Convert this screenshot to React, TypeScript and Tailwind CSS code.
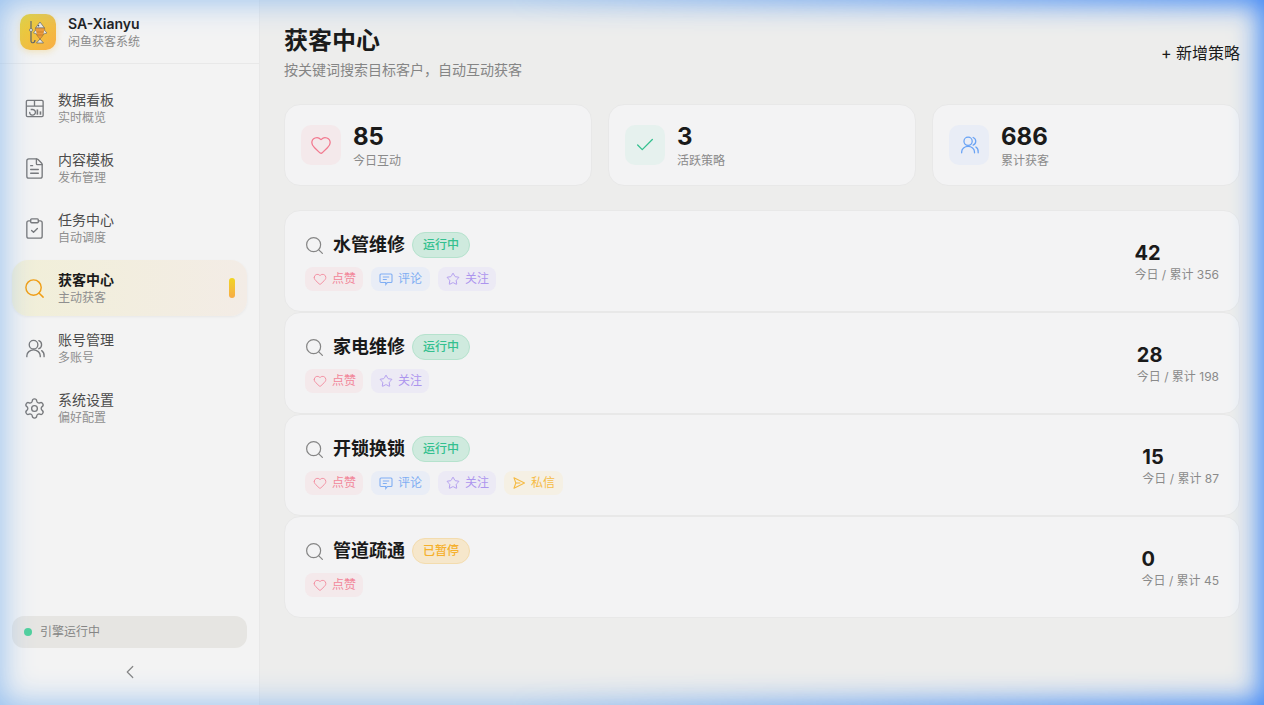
import { ChevronLeft, Check, ClipboardCheck, FileText, Heart, Search, Settings, Star } from 'lucide-react';
import type { ReactNode } from 'react';

function BoardIcon({ className }: { className?: string }) {
  return (
    <svg viewBox="0 0 24 24" fill="none" stroke="currentColor" strokeWidth="1.4" className={className}>
      <rect x="3.500" y="3.500" width="17.500" height="17" rx="1.200" />
      <path d="M3.500 9.500h17.500M12 3.500v6" />
      <path d="M7 15.500a3 3 0 1 0 3.200-2.500H8" />
      <path d="M15 13v5.500" strokeWidth="1.700" />
      <path d="M18.200 15v3.500" strokeWidth="1.700" />
    </svg>
  );
}

function UsersIcon({ className }: { className?: string }) {
  return (
    <svg viewBox="0 0 24 24" fill="none" stroke="currentColor" strokeWidth="1.400" strokeLinecap="round" className={className}>
      <circle cx="11" cy="8" r="4.500" />
      <path d="M16.500 3.800a4.500 4.500 0 0 1 0 8.400" />
      <path d="M4 20.500V19.500a7 6 0 0 1 14 0v1" />
      <path d="M19.500 14.200a6 6 0 0 1 2.500 5.300v1" />
    </svg>
  );
}

function CommentIcon({ className }: { className?: string }) {
  return (
    <svg viewBox="0 0 14 14" fill="none" stroke="currentColor" strokeWidth="1.100" className={className}>
      <path d="M2 2h10a1 1 0 0 1 1 1v6.500a1 1 0 0 1-1 1H8.500L6.800 12.500V10.500H2a1 1 0 0 1-1-1V3a1 1 0 0 1 1-1z" />
      <path d="M3.800 5h6.400M3.800 7.500h4" />
    </svg>
  );
}

function SendIcon({ className }: { className?: string }) {
  return (
    <svg viewBox="0 0 14 14" fill="none" stroke="currentColor" strokeWidth="1.100" strokeLinejoin="round" className={className}>
      <path d="M2 1.800 12.500 7 2 12.200 3.800 7z" />
      <path d="M3.800 7h4.500" />
    </svg>
  );
}

function FishLogo() {
  return (
    <svg viewBox="0 0 36 36" className="h-9 w-9">
      <path d="M11 7v20c0 2.500 4 2.500 4-1" fill="none" stroke="#5f6368" strokeWidth="1.200" />
      <circle cx="11" cy="16" r="1.500" fill="#f0f0e8" stroke="#5f6368" strokeWidth="0.700" />
      <path d="M20 8 24.500 14h-9z" fill="#ecebe6" stroke="#5f6368" strokeWidth="0.700" />
      <path d="M15.500 14h9c.8 3.800-1 7.500-4.500 11-3.500-3.500-5.300-7.200-4.500-11z" fill="#ee9a3a" stroke="#8a6a3c" strokeWidth="0.600" />
      <path d="M16.200 18h7.600M17 21h6" stroke="#b87420" strokeWidth="0.600" />
      <path d="M24.200 16l2.800 3-3.500 1M15.800 16l-2.300 3 3.300 1" fill="#ecebe6" stroke="#5f6368" strokeWidth="0.600" />
      <path d="M20 25l-3.500 4h7z" fill="#ecebe6" stroke="#5f6368" strokeWidth="0.700" />
      <circle cx="18.500" cy="11.800" r="0.800" fill="#374151" />
    </svg>
  );
}

const navItems = [
  { icon: <BoardIcon className="h-[23px] w-[23px]" />, title: '数据看板', sub: '实时概览' },
  { icon: <FileText className="h-[23px] w-[23px]" strokeWidth={1.4} />, title: '内容模板', sub: '发布管理' },
  { icon: <ClipboardCheck className="h-[23px] w-[23px]" strokeWidth={1.4} />, title: '任务中心', sub: '自动调度' },
  { icon: <Search className="h-[23px] w-[23px]" strokeWidth={1.5} />, title: '获客中心', sub: '主动获客', active: true },
  { icon: <UsersIcon className="h-[23px] w-[23px]" />, title: '账号管理', sub: '多账号' },
  { icon: <Settings className="h-[23px] w-[23px]" strokeWidth={1.4} />, title: '系统设置', sub: '偏好配置' },
];

const tagStyles: Record<string, { label: string; className: string; icon: ReactNode }> = {
  like: {
    label: '点赞',
    className: 'bg-[#f4e9eb] text-[#f2879a] pr-[7px]',
    icon: <Heart className="h-3.5 w-3.5" strokeWidth={1.5} />,
  },
  comment: {
    label: '评论',
    className: 'bg-[#e9edf6] text-[#80aef3] pr-2',
    icon: <CommentIcon className="h-3.5 w-3.5" />,
  },
  follow: {
    label: '关注',
    className: 'bg-[#eceaf5] text-[#ac95ee] pr-[7px]',
    icon: <Star className="h-3.5 w-3.5" strokeWidth={1.5} />,
  },
  message: {
    label: '私信',
    className: 'bg-[#f5f0e4] text-[#f5bb45] pr-2',
    icon: <SendIcon className="h-3.5 w-3.5" />,
  },
};

const strategies = [
  { name: '水管维修', running: true, tags: ['like', 'comment', 'follow'], today: 42, total: 356 },
  { name: '家电维修', running: true, tags: ['like', 'follow'], today: 28, total: 198 },
  { name: '开锁换锁', running: true, tags: ['like', 'comment', 'follow', 'message'], today: 15, total: 87 },
  { name: '管道疏通', running: false, tags: ['like'], today: 0, total: 45 },
];

const stats = [
  {
    value: '85',
    label: '今日互动',
    box: 'bg-[#f4e9eb] text-[#f2798f]',
    icon: <Heart className="h-[22px] w-[22px]" strokeWidth={1.4} />,
  },
  {
    value: '3',
    label: '活跃策略',
    box: 'bg-[#e6f1ee] text-[#34c08f]',
    icon: <Check className="h-[22px] w-[22px]" strokeWidth={1.4} />,
  },
  {
    value: '686',
    label: '累计获客',
    box: 'bg-[#e9edf6] text-[#69a3f5]',
    icon: <UsersIcon className="h-[22px] w-[22px]" />,
  },
];

export default function App() {
  return (
    <div className="relative flex h-[705px] w-[1264px] overflow-hidden bg-[#ededec] font-['Inter','Noto_Sans_CJK_SC',sans-serif] text-[#1a1a1a]">
      <aside className="flex w-[260px] shrink-0 flex-col border-r border-[#e8e8e8] bg-[#f3f3f3]">
        <div className="flex h-16 items-center gap-3 border-b border-[#e8e8e8] px-5">
          <div className="h-9 w-9 rounded-[10px] bg-gradient-to-br from-[#eed524] to-[#f7ad47] shadow-[0_2px_6px_rgba(240,190,60,0.3)]">
            <FishLogo />
          </div>
          <div>
            <div className="text-sm leading-5 font-semibold">SA-Xianyu</div>
            <div className="text-xs leading-4 text-[#8a8a8a]">闲鱼获客系统</div>
          </div>
        </div>

        <nav className="flex flex-col gap-1 px-3 pt-4">
          {navItems.map((item) => (
            <div
              key={item.title}
              className={
                item.active
                  ? 'flex h-14 items-center gap-3 rounded-2xl bg-gradient-to-r from-[#f1efd8] to-[#f3ece6] pr-3 pl-[11px] shadow-[0_1px_3px_rgba(0,0,0,0.05)]'
                  : 'flex h-14 items-center gap-3 rounded-2xl pr-3 pl-[11px]'
              }
            >
              <span className={item.active ? 'text-[#f09e14]' : 'text-[#77797c]'}>{item.icon}</span>
              <div className="flex-1">
                <div className={item.active ? 'text-sm leading-5 font-semibold text-[#1a1a1a]' : 'text-sm leading-5 text-[#4b4b4b]'}>
                  {item.title}
                </div>
                <div className="text-xs leading-4 text-[#8f8f8f]">{item.sub}</div>
              </div>
              {item.active && <div className="h-5 w-1.5 rounded-full bg-gradient-to-b from-[#f0d51f] to-[#f7ab45]" />}
            </div>
          ))}
        </nav>

        <div className="mt-auto px-3">
          <div className="flex h-8 items-center gap-2 rounded-xl bg-[#e6e5e2] px-3 text-xs text-[#858585]">
            <span className="h-2 w-2 rounded-full bg-[#4fd09c]" />
            引擎运行中
          </div>
        </div>
        <div className="flex h-[57px] items-center justify-center pb-[9px] text-[#858585]">
          <ChevronLeft className="h-[22px] w-[22px]" strokeWidth={1.3} />
        </div>
      </aside>

      <main className="flex-1 px-6 pt-[25px]">
        <div className="flex items-start justify-between">
          <div>
            <h1 className="text-2xl leading-8 font-bold">获客中心</h1>
            <p className="mt-[3px] text-sm leading-5 text-[#858585]">按关键词搜索目标客户，自动互动获客</p>
          </div>
          <button className="mt-4 text-base leading-6">+ 新增策略</button>
        </div>

        <div className="mt-6 grid grid-cols-3 gap-4">
          {stats.map((s) => (
            <div key={s.label} className="flex h-[82px] items-center gap-3 rounded-2xl border border-[#e8e8e8] bg-[#f3f3f4] px-4">
              <div className={`flex h-10 w-10 items-center justify-center rounded-[10px] ${s.box}`}>{s.icon}</div>
              <div>
                <div className="text-2xl leading-8 font-bold">{s.value}</div>
                <div className="text-xs leading-4 text-[#8a8a8a]">{s.label}</div>
              </div>
            </div>
          ))}
        </div>

        <div className="mt-6 flex flex-col">
          {strategies.map((s) => (
            <div key={s.name} className="flex h-[102px] items-center justify-between rounded-2xl border border-[#e8e8e8] bg-[#f3f3f4] px-5">
              <div>
                <div className="flex items-center">
                  <Search className="-ml-px h-[21px] w-[21px] text-[#858585]" strokeWidth={1.4} />
                  <span className="ml-2 text-lg leading-7 font-semibold">{s.name}</span>
                  <span
                    className={
                      s.running
                        ? 'ml-[7px] rounded-full border border-[#b5e2cd] bg-[#cfeade] px-[10px] py-[3px] text-xs leading-[18px] font-medium text-[#34c08f]'
                        : 'ml-[7px] rounded-full border border-[#f3dcae] bg-[#f6e7cb] px-[10px] py-[3px] text-xs leading-[18px] font-medium text-[#f5b02c]'
                    }
                  >
                    {s.running ? '运行中' : '已暂停'}
                  </span>
                </div>
                <div className="mt-2 flex gap-2">
                  {s.tags.map((t) => (
                    <span key={t} className={`flex h-6 items-center gap-[5px] rounded-lg pl-2 text-xs ${tagStyles[t].className}`}>
                      {tagStyles[t].icon}
                      {tagStyles[t].label}
                    </span>
                  ))}
                </div>
              </div>
              <div>
                <div className="text-xl leading-7 font-bold">{s.today}</div>
                <div className="text-xs leading-4 text-[#8a8a8a]">今日 / 累计 {s.total}</div>
              </div>
            </div>
          ))}
        </div>
      </main>

      {/* blue window glow */}
      <div className="pointer-events-none absolute inset-0 shadow-[inset_0_0_32px_#8dbbef]" />
      <div className="pointer-events-none absolute inset-0 shadow-[inset_0_0_28px_#3d84f7] [mask-image:linear-gradient(to_right,transparent_40%,black)]" />
    </div>
  );
}
